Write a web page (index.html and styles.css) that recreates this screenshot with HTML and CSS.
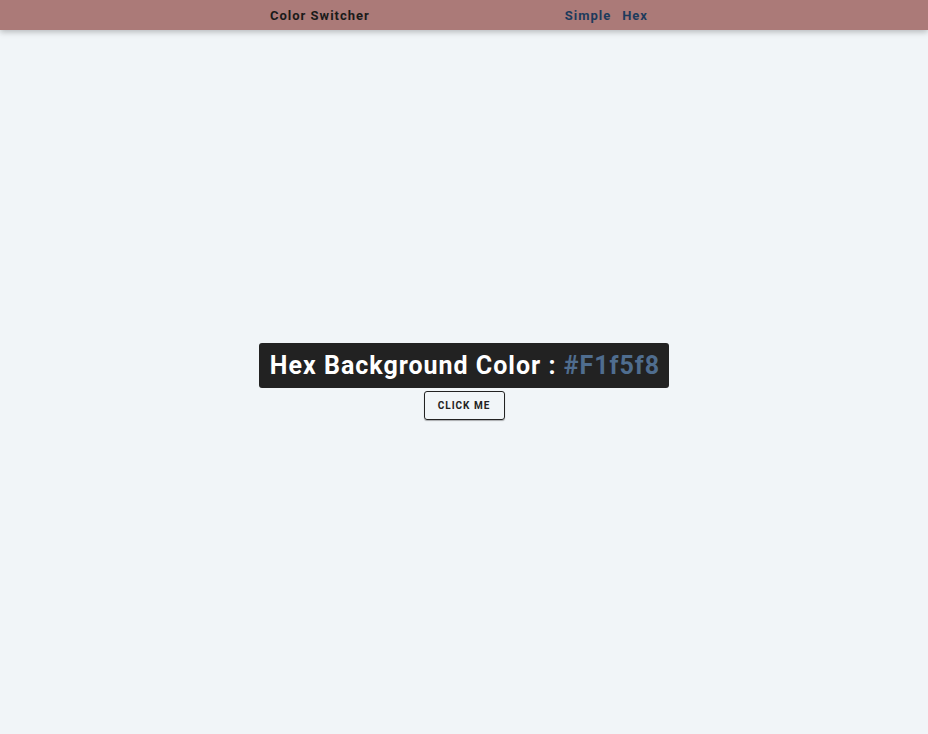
FILE: index.html
```html
<!DOCTYPE html>
<html>
<head>
<meta charset="utf-8">
<link rel="stylesheet" href="styles.css">
</head>
<body>
<nav class="nav">
  <div class="nav-center">
    <h4 class="brand">Color Switcher</h4>
    <ul class="links">
      <li><a href="#">Simple</a></li>
      <li><a href="#">Hex</a></li>
    </ul>
  </div>
</nav>
<main class="main">
  <div class="container">
    <h2 class="banner">Hex Background Color : <span class="color">#F1f5f8</span></h2>
    <button class="btn">click me</button>
  </div>
</main>
</body>
</html>
```
FILE: styles.css
```css
* { margin: 0; padding: 0; box-sizing: border-box; }
body {
  font-family: Roboto, "Liberation Sans", sans-serif;
  background: #f1f5f8;
  color: #222;
}
.nav {
  height: 30px;
  background: #ab7a78;
  box-shadow: 0 2px 6px rgba(0,0,0,0.25);
  position: relative;
  z-index: 1;
}
.nav-center {
  width: 378px;
  margin-left: 270px;
  height: 30px;
  display: flex;
  align-items: center;
  justify-content: space-between;
}
.brand {
  font-size: 13px;
  font-weight: 700;
  letter-spacing: 1px;
  color: #1a1a1a;
}
.links {
  list-style: none;
  display: flex;
  gap: 11px;
}
.links a {
  display: block;
  text-decoration: none;
  font-size: 13px;
  line-height: 15px;
  font-weight: 700;
  letter-spacing: 1px;
  color: #1d3a5c;
}
.main {
  min-height: calc(100vh - 30px);
  display: flex;
  align-items: center;
  justify-content: center;
  padding-bottom: 1px;
}
.container {
  display: flex;
  flex-direction: column;
  align-items: center;
  gap: 3px;
}
.banner {
  background: #222;
  color: #fff;
  font-size: 25px;
  font-weight: 700;
  letter-spacing: 1px;
  border-radius: 3px;
  height: 45px;
  display: flex;
  align-items: center;
  padding: 0 9px 0 11px;
  white-space: pre;
}
.color { color: #4f6d8f; }
.btn {
  font-family: Roboto, "Liberation Sans", sans-serif;
  text-transform: uppercase;
  font-size: 10px;
  font-weight: 700;
  letter-spacing: 1px;
  color: #222;
  background: transparent;
  border: 1px solid #222;
  border-radius: 3px;
  box-shadow: 0 1px 1px rgba(0,0,0,0.3);
  width: 81px;
  height: 29px;
  cursor: pointer;
}
```
